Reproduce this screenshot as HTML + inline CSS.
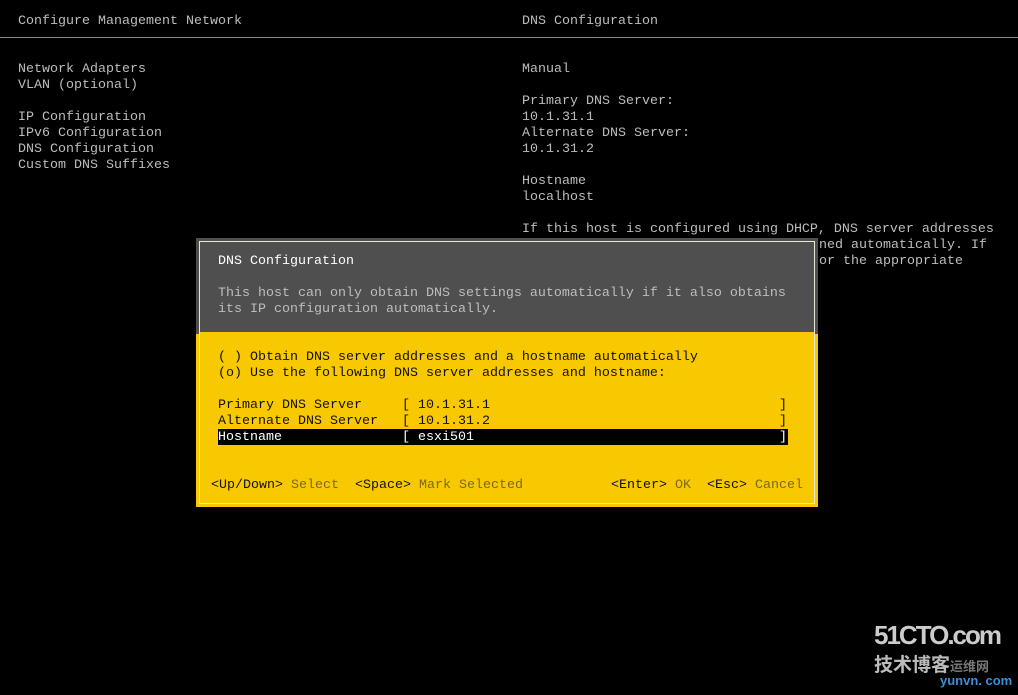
<!DOCTYPE html>
<html><head><meta charset="utf-8"><style>
body{margin:0;width:1018px;height:695px;background:#000;overflow:hidden;position:relative;font-family:"Liberation Mono",monospace;font-size:13.33px;color:#bdbdbd}
.t{position:absolute;white-space:pre;line-height:16px;height:16px;margin-top:2px}
</style></head><body>
<div class="t" style="left:18px;top:12px">Configure Management Network</div>
<div class="t" style="left:522px;top:12px">DNS Configuration</div>
<div style="position:absolute;left:0;top:37px;width:1018px;height:1px;background:#888"></div>
<div class="t" style="left:18px;top:60px">Network Adapters
VLAN (optional)

IP Configuration
IPv6 Configuration
DNS Configuration
Custom DNS Suffixes</div>
<div class="t" style="left:522px;top:60px">Manual

Primary DNS Server:
10.1.31.1
Alternate DNS Server:
10.1.31.2

Hostname
localhost

If this host is configured using DHCP, DNS server addresses</div>
<div class="t" style="left:819px;top:236px">ned automatically. If</div>
<div class="t" style="left:819px;top:252px">or the appropriate</div>

<div style="position:absolute;left:196px;top:238px;width:622px;height:269px;background:#f8c800"></div>
<div style="position:absolute;left:196px;top:238px;width:622px;height:96px;background:#4f4f4f"></div>
<div style="position:absolute;left:199px;top:241px;width:614px;height:261px;border:1px solid #e8e8d8"></div>
<div style="position:absolute;left:200px;top:332px;width:614px;height:2px;background:#f8c800"></div>
<div class="t" style="left:218px;top:252px;color:#fff">DNS Configuration</div>
<div class="t" style="left:218px;top:284px;color:#bdbdbd">This host can only obtain DNS settings automatically if it also obtains
its IP configuration automatically.</div>
<div class="t" style="left:218px;top:348px;color:#111">( ) Obtain DNS server addresses and a hostname automatically
(o) Use the following DNS server addresses and hostname:</div>
<div class="t" style="left:218px;top:396px;color:#111">Primary DNS Server     [ 10.1.31.1</div>
<div class="t" style="left:218px;top:412px;color:#111">Alternate DNS Server   [ 10.1.31.2</div>
<div class="t" style="left:779px;top:396px;color:#111">]</div>
<div class="t" style="left:779px;top:412px;color:#111">]</div>
<div style="position:absolute;left:218px;top:429px;width:570px;height:16px;background:#000"></div>
<div class="t" style="left:218px;top:428px;color:#fff">Hostname               [ esxi501</div>
<div class="t" style="left:779px;top:428px;color:#fff">]</div>
<div class="t" style="left:211px;top:476px;color:#111">&lt;Up/Down&gt; <span style="color:#7a6a20">Select</span>  &lt;Space&gt; <span style="color:#7a6a20">Mark Selected</span></div>
<div class="t" style="left:611px;top:476px;color:#111">&lt;Enter&gt; <span style="color:#7a6a20">OK</span>  &lt;Esc&gt; <span style="color:#7a6a20">Cancel</span></div>

<div style="position:absolute;left:874px;top:620px;font:bold 26px 'Liberation Sans',sans-serif;color:#ccc;letter-spacing:-2px">51CTO.com</div>
<div style="position:absolute;left:874px;top:653px;font:bold 19px 'Noto Sans CJK SC',sans-serif;color:#bbb;line-height:22px">技术博客<span style="font-size:13px;color:#777">运维网</span></div>
<div style="position:absolute;left:940px;top:673px;font:bold 13px 'Liberation Sans',sans-serif;color:#3a8fd8">yunvn. com</div>
</body></html>
